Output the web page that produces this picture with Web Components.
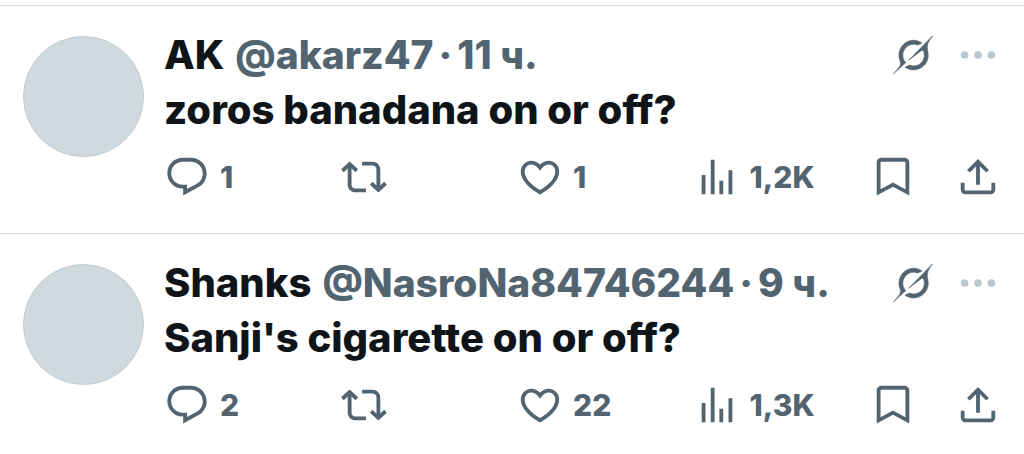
<!DOCTYPE html>
<html lang="ru">
<head>
<meta charset="utf-8">
<meta name="viewport" content="width=device-width, initial-scale=1">
<title>Лента</title>
<style>
  body {
    margin: 0;
    background: #fff;
    color: #0f1419;
    font-family: Inter, "Liberation Sans", Arial, sans-serif;
    font-weight: 800;
  }
</style>
</head>
<body>
<feed-timeline>
  <feed-post>
    <span slot="name">AK</span>
    <span slot="handle">@akarz47</span>
    <span slot="time">11 ч.</span>
    <span slot="text">zoros banadana on or off?</span>
    <action-button slot="actions" icon="reply" label="Ответить">1</action-button>
    <action-button slot="actions" icon="repost" label="Репост"></action-button>
    <action-button slot="actions" icon="like" label="Нравится">1</action-button>
    <action-button slot="actions" icon="views" label="Просмотры">1,2K</action-button>
    <action-button slot="actions" icon="bookmark" label="Закладка"></action-button>
    <action-button slot="actions" icon="share" label="Поделиться"></action-button>
  </feed-post>
  <feed-post>
    <span slot="name">Shanks</span>
    <span slot="handle">@NasroNa84746244</span>
    <span slot="time">9 ч.</span>
    <span slot="text">Sanji's cigarette on or off?</span>
    <action-button slot="actions" icon="reply" label="Ответить">2</action-button>
    <action-button slot="actions" icon="repost" label="Репост"></action-button>
    <action-button slot="actions" icon="like" label="Нравится">22</action-button>
    <action-button slot="actions" icon="views" label="Просмотры">1,3K</action-button>
    <action-button slot="actions" icon="bookmark" label="Закладка"></action-button>
    <action-button slot="actions" icon="share" label="Поделиться"></action-button>
  </feed-post>
</feed-timeline>

<script>
const ICONS = {
  reply: '<path d="M1.751 10c0-4.42 3.584-8 8.005-8h4.366c4.49 0 8.129 3.64 8.129 8.13 0 2.96-1.607 5.68-4.196 7.11l-8.054 4.46v-3.69h-.067c-4.49.1-8.183-3.51-8.183-8.01zm8.005-6c-3.317 0-6.005 2.69-6.005 6 0 3.37 2.77 6.08 6.138 6.01l.351-.01h1.761v2.3l5.087-2.81c1.951-1.08 3.163-3.13 3.163-5.36 0-3.39-2.744-6.13-6.129-6.13H9.756z"/>',
  repost: '<path d="M4.5 3.88l4.432 4.14-1.364 1.46L5.5 7.55V16c0 1.1.896 2 2 2H13v2H7.5c-2.209 0-4-1.79-4-4V7.55L1.432 9.48.068 8.02 4.5 3.88zM16.5 6H11V4h5.5c2.209 0 4 1.79 4 4v8.45l2.068-1.93 1.364 1.46-4.432 4.14-4.432-4.14 1.364-1.46 2.068 1.93V8c0-1.1-.896-2-2-2z"/>',
  like: '<path d="M16.697 5.5c-1.222-.06-2.679.51-3.89 2.16l-.805 1.09-.806-1.09C9.984 6.01 8.526 5.44 7.304 5.5c-1.243.07-2.349.78-2.91 1.91-.552 1.12-.633 2.78.479 4.82 1.074 1.97 3.257 4.27 7.129 6.61 3.87-2.34 6.052-4.64 7.126-6.61 1.111-2.04 1.03-3.7.477-4.82-.561-1.13-1.666-1.84-2.908-1.91zm4.187 7.69c-1.351 2.48-4.001 5.12-8.379 7.67l-.503.3-.504-.3c-4.379-2.55-7.029-5.19-8.382-7.67-1.36-2.5-1.41-4.86-.514-6.67.887-1.79 2.647-2.91 4.601-3.01 1.651-.09 3.368.56 4.798 2.01 1.429-1.45 3.146-2.1 4.796-2.01 1.954.1 3.714 1.22 4.601 3.01.896 1.81.846 4.17-.514 6.67z"/>',
  views: '<path d="M8.75 21V3h2v18h-2zM18 21V8.5h2V21h-2zM4 21l.004-10h2L6 21H4zm9.248 0v-7h2v7h-2z"/>',
  bookmark: '<path d="M3.5 4.5C3.5 3.12 4.62 2 6 2h12c1.38 0 2.5 1.12 2.5 2.5v17.2L12 17.1l-8.500 4.600V4.500zM6 4c-.28 0-.5.22-.5.5v13.850L12 14.850l6.500 3.500V4.500c0-.28-.22-.5-.5-.5H6z"/>',
  share: '<path d="M12 2.59l5.7 5.7-1.41 1.42L13 6.41V16h-2V6.41l-3.3 3.3-1.41-1.42L12 2.59zM21 15l-.02 3.51c0 1.38-1.12 2.49-2.5 2.49H5.5C4.11 21 3 19.88 3 18.5V15h2v3.5c0 .28.22.5.5.5h12.98c.28 0 .5-.22.5-.5L19 15h2z"/>',
  more: '<circle cx="5" cy="12" r="2"/><circle cx="12" cy="12" r="2"/><circle cx="19" cy="12" r="2"/>',
  grok: '<g transform="translate(1.800 2) scale(.62)" stroke="currentColor" stroke-width=".5"><path d="M12.745 20.54l10.97-8.19c.539-.4 1.307-.244 1.564.38 1.349 3.288.746 7.241-1.938 9.955-2.683 2.714-6.417 3.31-9.83 1.954l-3.728 1.745c5.347 3.697 11.84 2.782 15.898-1.324 3.219-3.255 4.216-7.692 3.284-11.693l.008.009c-1.351-5.878.332-8.227 3.782-13.031L33 0l-4.54 4.59v-.014L12.743 20.544m-2.263 1.987c-3.837-3.707-3.175-9.446.1-12.755 2.42-2.449 6.388-3.448 9.852-1.979l3.72-1.737c-.67-.49-1.53-1.017-2.515-1.387-4.455-1.854-9.789-.931-13.41 2.728-3.483 3.523-4.579 8.94-2.697 13.561 1.405 3.454-.899 5.898-3.22 8.364C1.49 30.2.666 31.074 0 32l10.478-9.466"/></g>'
};

class FeedTimeline extends HTMLElement {
  constructor() {
    super();
    this.attachShadow({ mode: 'open' }).innerHTML = `
      <style>:host { display: block; padding-top: 5px; } main { display: block; }</style>
      <main><slot></slot></main>`;
  }
}

class ActionButton extends HTMLElement {
  constructor() {
    super();
    this.attachShadow({ mode: 'open' }).innerHTML = `
      <style>
        :host { display: block; color: #536471; }
        button {
          display: flex; align-items: center; gap: 10px;
          margin: 0; padding: 0; border: 0; background: none;
          color: inherit; font: inherit; font-size: 30px; line-height: 46px;
          cursor: pointer;
        }
        svg { display: block; flex: none; width: 46px; height: 46px; fill: currentColor; }
        :host([icon="more"]) { color: #b9c8d0; }
      </style>
      <button type="button" aria-label="${this.getAttribute('label')}">
        <svg viewBox="0 0 24 24" aria-hidden="true">${ICONS[this.getAttribute('icon')]}</svg>
        <slot></slot>
      </button>`;
    if (!this.textContent) this.shadowRoot.querySelector('slot').remove();
  }
}

class FeedPost extends HTMLElement {
  constructor() {
    super();
    this.attachShadow({ mode: 'open' }).innerHTML = `
      <style>
        :host { display: block; border-top: 1px solid #d9dcde; }
        article { display: flex; gap: 20px; padding: 21px 23px 33px; }
        .avatar {
          flex: none; box-sizing: border-box; width: 121px; height: 121px; margin-top: 9px;
          border: 1px solid #c3cbd0; border-radius: 50%; background: #cfd9de;
        }
        .body { flex: 1; min-width: 0; }
        header { display: flex; align-items: center; gap: 19px; }
        .meta {
          display: flex; flex: 1; min-width: 0; gap: 5px;
          font-size: 39px; line-height: 55px; white-space: nowrap; color: #536471;
        }
        a { color: inherit; text-decoration: none; }
        .name { color: #0f1419; font-size: 40px; margin-right: 6px; }
        p { margin: 0; font-size: 40px; line-height: 55px; }
        footer {
          display: grid; grid-template-columns: repeat(4, 1fr) auto auto;
          margin-top: 17px;
        }
        ::slotted([icon="share"]) { margin-left: 39px; }
      </style>
      <article>
        <div class="avatar"></div>
        <div class="body">
          <header>
            <div class="meta">
              <a class="name" href="#"><slot name="name"></slot></a>
              <a href="#"><slot name="handle"></slot></a>
              <span>·</span>
              <a href="#"><slot name="time"></slot></a>
            </div>
            <action-button icon="grok" label="Grok"></action-button>
            <action-button icon="more" label="Ещё"></action-button>
          </header>
          <p><slot name="text"></slot></p>
          <footer><slot name="actions"></slot></footer>
        </div>
      </article>`;
  }
}

customElements.define('feed-timeline', FeedTimeline);
customElements.define('action-button', ActionButton);
customElements.define('feed-post', FeedPost);
</script>
</body>
</html>
